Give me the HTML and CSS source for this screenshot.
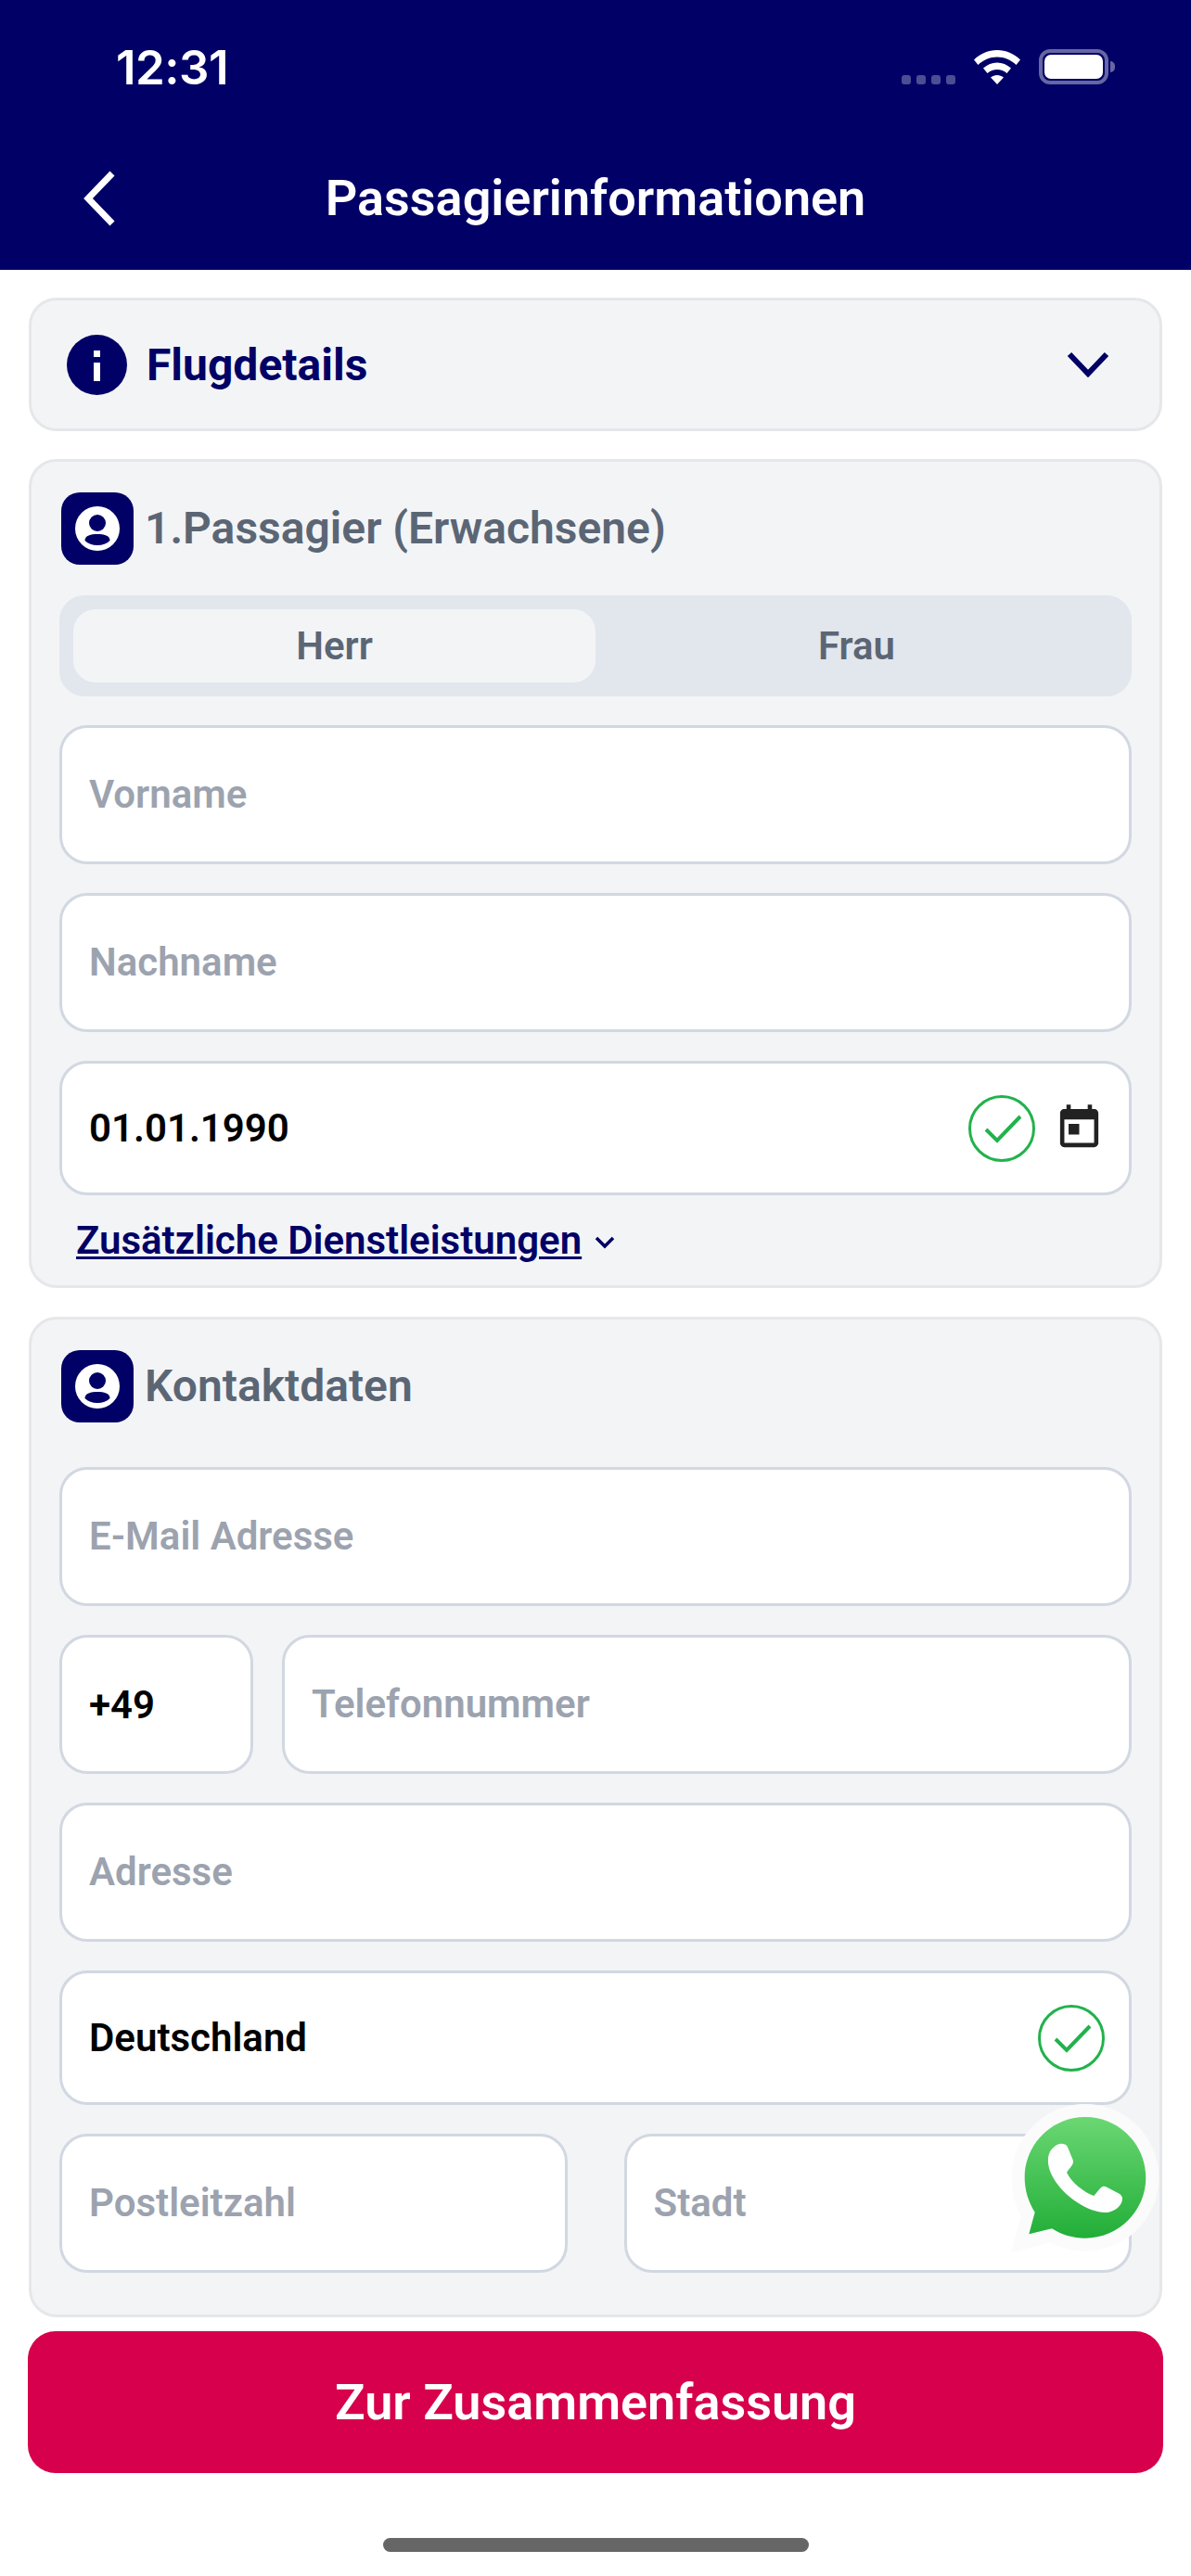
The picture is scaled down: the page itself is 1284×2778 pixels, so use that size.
FILE: index.html
```html
<!DOCTYPE html>
<html lang="de">
<head>
<meta charset="utf-8">
<title>Passagierinformationen</title>
<link rel="stylesheet" href="styles.css">
</head>
<body>
<div class="app">
  <header class="top">
    <div class="status">
      <span class="time">12:31</span>
      <div class="status-icons">
        <div class="signal"><i></i><i></i><i></i><i></i></div>
        <svg class="wifi" viewBox="0 0 50 37"><path d="M25 0C15.500 0 7 3.800 0 10.500L4.500 16C10 10.700 17 7.500 25 7.500S40 10.700 45.500 16L50 10.500C43 3.800 34.500 0 25 0ZM25 13.500C19.500 13.500 14.500 15.700 10 19.500L14.500 25C17.500 22.500 21 21 25 21S32.500 22.500 35.500 25L40 19.500C35.500 15.700 30.500 13.500 25 13.500ZM25 27C22.500 27 20 28 18 29.500L25 37L32 29.500C30 28 27.500 27 25 27Z" fill="#fff"/></svg>
        <div class="battery"><div class="battery-body"><div class="battery-fill"></div></div><div class="battery-nub"></div></div>
      </div>
    </div>
    <nav class="nav">
      <svg class="back" viewBox="0 0 35 60"><path d="M31 3L5 30L31 57" fill="none" stroke="#fff" stroke-width="7"/></svg>
      <h1 class="title">Passagierinformationen</h1>
    </nav>
  </header>

  <main class="content">
    <section class="card details">
      <div class="details-left">
        <svg class="info" viewBox="0 0 65 65"><circle cx="32.500" cy="32.500" r="32.500" fill="#000066"/><rect x="29" y="17" width="7" height="7" fill="#fff"/><rect x="29" y="30" width="7" height="20" fill="#fff"/></svg>
        <span class="details-text">Flugdetails</span>
      </div>
      <svg class="chevron" viewBox="0 0 46 30"><path d="M3 4L23 25L43 4" fill="none" stroke="#000066" stroke-width="6"/></svg>
    </section>

    <section class="card passenger">
      <div class="card-head">
        <svg class="person" viewBox="0 0 78 78"><rect width="78" height="78" rx="20" fill="#000066"/><circle cx="39" cy="39" r="24" fill="#fff"/><circle cx="39" cy="33" r="9" fill="#000066"/><path d="M25.500 52C25.500 46.500 32 45 39 45S52.500 46.500 52.500 52C49 55.500 44.500 57 39 57S29 55.500 25.500 52Z" fill="#000066"/></svg>
        <h2 class="card-title">1.Passagier (Erwachsene)</h2>
      </div>
      <div class="toggle">
        <div class="toggle-item active">Herr</div>
        <div class="toggle-item">Frau</div>
      </div>
      <div class="field"><span class="ph">Vorname</span></div>
      <div class="field"><span class="ph">Nachname</span></div>
      <div class="field short date">
        <span class="val">01.01.1990</span>
        <svg class="ok" viewBox="0 0 72 72"><circle cx="36" cy="36" r="34.500" fill="none" stroke="#22b24c" stroke-width="3"/><path d="M19 37L31 49L56 23" fill="none" stroke="#22b24c" stroke-width="4"/></svg>
        <svg class="cal" viewBox="0 0 24 24"><path d="M12 10H7v5h5v-5zM16 1v2H8V1H6v2H5c-1.110 0-1.990.900-1.990 2L3 19c0 1.100.890 2 2 2h14c1.100 0 2-.900 2-2V5c0-1.100-.900-2-2-2h-1V1h-2zm3 18H5V8h14v11z" fill="#222"/></svg>
      </div>
      <div class="more">
        <span class="more-link">Zusätzliche Dienstleistungen</span>
        <svg class="more-chev" viewBox="0 0 22 14"><path d="M2 2L11 11L20 2" fill="none" stroke="#000066" stroke-width="3.500"/></svg>
      </div>
    </section>

    <section class="card contact">
      <div class="card-head">
        <svg class="person" viewBox="0 0 78 78"><rect width="78" height="78" rx="20" fill="#000066"/><circle cx="39" cy="39" r="24" fill="#fff"/><circle cx="39" cy="33" r="9" fill="#000066"/><path d="M25.500 52C25.500 46.500 32 45 39 45S52.500 46.500 52.500 52C49 55.500 44.500 57 39 57S29 55.500 25.500 52Z" fill="#000066"/></svg>
        <h2 class="card-title">Kontaktdaten</h2>
      </div>
      <div class="field"><span class="ph">E-Mail Adresse</span></div>
      <div class="row">
        <div class="field code"><span class="val">+49</span></div>
        <div class="field grow"><span class="ph">Telefonnummer</span></div>
      </div>
      <div class="field"><span class="ph">Adresse</span></div>
      <div class="field short country">
        <span class="val">Deutschland</span>
        <svg class="ok" viewBox="0 0 72 72"><circle cx="36" cy="36" r="34.500" fill="none" stroke="#22b24c" stroke-width="3"/><path d="M19 37L31 49L56 23" fill="none" stroke="#22b24c" stroke-width="4"/></svg>
      </div>
      <div class="row wide-gap">
        <div class="field half"><span class="ph">Postleitzahl</span></div>
        <div class="field half"><span class="ph">Stadt</span></div>
      </div>
    </section>

    <button class="cta" type="button">Zur Zusammenfassung</button>
  </main>

  <div class="home"></div>

  <svg class="wa" viewBox="0 0 660 660">
    <defs>
      <linearGradient id="wag" x1="0" y1="0" x2="0" y2="1"><stop offset="0" stop-color="#6bd773"/><stop offset="1" stop-color="#22ae38"/></linearGradient>
    </defs>
    <path d="M330 87C198 87 92 194 92 325C92 370 103 412 122 450L90 568L215 535C250 553 289 563 330 563C462 563 568 457 568 325C568 194 462 87 330 87Z" fill="#fbfbfb"/>
    <path d="M330 129C222 129 134 217 134 325C134 366 146 404 167 437L148 508L222 490C253 510 290 521 330 521C438 521 526 433 526 325C526 217 438 129 330 129Z" fill="url(#wag)"/>
    <path d="M240 218C250 214 265 214 272 224L290 268C293 278 290 284 270 308C285 340 325 372 358 384L380 358C386 352 392 352 400 356L440 377C450 383 452 392 448 404C440 425 415 438 395 438C340 438 270 390 235 340C215 310 208 285 210 262C212 240 225 226 240 218Z" fill="#fff"/>
  </svg>
</div>
</body>
</html>
```
FILE: styles.css
```css
* { box-sizing: border-box; margin: 0; padding: 0; }
html, body { width: 1284px; height: 2778px; background: #fff; overflow: hidden; }
body { font-family: Roboto, "Liberation Sans", sans-serif; }

.app { position: relative; width: 1284px; height: 2778px; background: #fff; }

/* header */
.top { height: 291px; background: #000066; color: #fff; padding-top: 44px; }
.status { display: flex; justify-content: space-between; align-items: flex-start; height: 60px; padding: 0 82px 0 125px; }
.time { font-family: Inter, Roboto, sans-serif; font-size: 51px; font-weight: 600; line-height: 58px; letter-spacing: -0.500px; }
.status-icons { display: flex; align-items: flex-end; height: 47px; }
.signal { display: flex; gap: 6px; margin-right: 20px; }
.signal i { display: block; width: 10px; height: 10px; border-radius: 3px; background: rgba(255,255,255,.3); }
.wifi { display: block; width: 50px; height: 37px; margin-right: 20px; }
.battery { display: flex; align-items: center; }
.battery-body { width: 75px; height: 38px; border: 4px solid rgba(255,255,255,.4); border-radius: 12px; padding: 2px; }
.battery-fill { width: 100%; height: 100%; background: #fff; border-radius: 7px; }
.battery-nub { width: 5px; height: 12px; margin-left: 2px; background: rgba(255,255,255,.4); border-radius: 0 6px 6px 0; }

.nav { position: relative; display: flex; justify-content: center; align-items: center; height: 60px; margin-top: 80px; }
.back { position: absolute; left: 90px; top: 0; width: 35px; height: 60px; }
.title { font-size: 54px; font-weight: 650; line-height: 60px; }

/* layout */
.content { padding: 30px 31px 0; display: flex; flex-direction: column; }
.card { background: #f3f4f6; border: 3px solid #e5e7eb; border-radius: 30px; }

.details { height: 144px; display: flex; justify-content: space-between; align-items: center; padding: 0 54px 0 38px; margin-bottom: 30px; }
.details-left { display: flex; align-items: center; gap: 21px; }
.info { display: block; width: 65px; height: 65px; }
.details-text { font-size: 48px; font-weight: 700; color: #000066; line-height: 60px; padding-top: 2px; }
.chevron { display: block; width: 46px; height: 30px; }

.passenger { height: 894px; padding: 33px 30px 0; display: flex; flex-direction: column; gap: 31px; margin-bottom: 31px; }
.contact { height: 1079px; padding: 33px 30px 0; display: flex; flex-direction: column; gap: 31px; }

.card-head { display: flex; align-items: center; gap: 12px; height: 78px; margin-left: 2px; }
.person { display: block; width: 78px; height: 78px; flex: none; }
.card-title { font-size: 48px; font-weight: 650; color: #5b6675; line-height: 60px; }
.contact .card-head { margin-bottom: 17px; }
.passenger .card-head { margin-bottom: 2px; }

.toggle { display: flex; height: 109px; background: #e2e6ed; border-radius: 27px; padding: 15px; }
.toggle-item { flex: 1; display: flex; align-items: center; justify-content: center; font-size: 42px; font-weight: 650; color: #5b6675; border-radius: 24px; }
.toggle-item.active { background: #f3f4f6; }

.field { display: flex; align-items: center; height: 150px; background: #fff; border: 3px solid #d1d8e1; border-radius: 30px; padding: 0 29px; }
.field.short { height: 145px; }
.ph { font-size: 42px; font-weight: 600; color: #9ca3af; line-height: 50px; margin-top: -1px; }
.val { font-size: 42px; font-weight: 650; color: #000; }
.date { padding-right: 26px; }
.date .ok { margin-left: auto; margin-right: 20px; }
.country { justify-content: space-between; padding-right: 26px; }
.ok { display: block; width: 72px; height: 72px; flex: none; }
.cal { display: block; width: 55px; height: 55px; flex: none; }

.more { display: flex; align-items: center; gap: 14px; padding-left: 18px; margin-top: -7.500px; }
.more-link { font-size: 42px; font-weight: 650; color: #000066; text-decoration: underline; text-decoration-thickness: 3px; text-underline-offset: 3px; line-height: 50px; }
.more-chev { display: block; width: 22px; height: 14px; margin-top: 4px; }

.row { display: flex; gap: 31px; }
.row.wide-gap { gap: 61px; }
.code { width: 209px; flex: none; }
.grow { flex: 1; }
.half { flex: 1; }

.cta { height: 153px; margin: 15px -1px 0; background: #d6004c; border: 0; border-radius: 30px; color: #fff; font-family: inherit; font-size: 54px; font-weight: 650; }

.home { position: absolute; left: 413px; top: 2737px; width: 459px; height: 15px; border-radius: 8px; background: #666; }
.wa { position: absolute; left: 1060px; top: 2240px; width: 220px; height: 220px; }
```
